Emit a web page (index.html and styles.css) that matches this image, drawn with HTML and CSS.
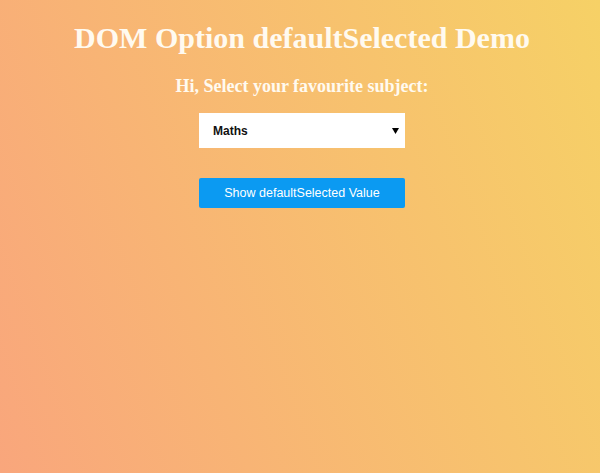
FILE: index.html
```html
<!DOCTYPE html>
<html lang="en">
<head>
    <meta charset="UTF-8">
    <title>DOM Option defaultSelected</title>
    <link rel="stylesheet" href="styles.css">
</head>
<body>
    <h1>DOM Option defaultSelected Demo</h1>
    <h3>Hi, Select your favourite subject:</h3>
    <div class="box">
        <select class="subject">
            <option selected>Maths</option>
            <option>Physics</option>
            <option>Chemistry</option>
            <option>English</option>
        </select>
        <button class="btn">Show defaultSelected Value</button>
        <p class="result"></p>
    </div>
</body>
</html>
```

FILE: styles.css
```css
* {
    box-sizing: border-box;
}
html {
    height: 100%;
}
body {
    margin: 0;
    padding-left: 4px;
    min-height: 100%;
    text-align: center;
    font-family: "Liberation Serif", "Times New Roman", serif;
    color: #fffaf0;
    background: linear-gradient(70deg, #f9a67c, #f6d166);
}
h1 {
    margin: 0;
    padding-top: 20px;
    font-size: 30px;
    line-height: 36px;
}
h3 {
    margin: 20px 0 0;
    font-size: 18px;
    line-height: 21px;
}
.box {
    width: 206px;
    margin: 16px auto 0;
    display: flex;
    flex-direction: column;
    gap: 30px;
}
.subject {
    appearance: none;
    height: 35px;
    border: none;
    border-radius: 0;
    padding: 0 14px;
    background: #fff url("data:image/svg+xml,%3Csvg xmlns='http://www.w3.org/2000/svg' width='7' height='7'%3E%3Cpath d='M0 1h7L3.5 7z' fill='%23000'/%3E%3C/svg%3E") no-repeat right 6px center;
    font-family: "Liberation Sans", Arial, sans-serif;
    font-size: 12px;
    font-weight: bold;
    color: #111;
}
.btn {
    height: 30px;
    border: none;
    border-radius: 2px;
    background: #0b9af2;
    color: #fff;
    font-family: "Liberation Sans", Arial, sans-serif;
    font-size: 12.5px;
    cursor: pointer;
}
.result {
    margin: 0;
}
```
